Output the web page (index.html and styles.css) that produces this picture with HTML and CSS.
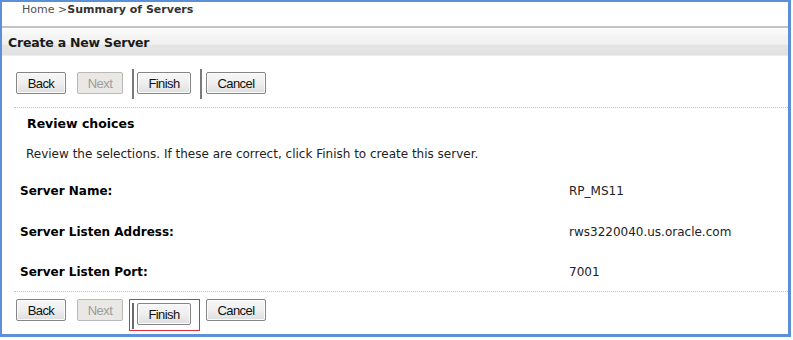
FILE: index.html
```html
<!DOCTYPE html>
<html>
<head>
<meta charset="utf-8">
<link rel="stylesheet" href="styles.css">
</head>
<body>
<div class="frame">
  <div class="crumbs"><span class="home">Home &gt;</span><span class="cur">Summary of Servers</span></div>
  <div class="title">Create a New Server</div>
  <div class="toolbar top">
    <button class="btn back">Back</button>
    <button class="btn next dis">Next</button>
    <span class="sep"></span>
    <button class="btn finish">Finish</button>
    <span class="sep"></span>
    <button class="btn cancel">Cancel</button>
  </div>
  <div class="content">
    <div class="sub">Review choices</div>
    <div class="desc">Review the selections. If these are correct, click Finish to create this server.</div>
    <div class="rows">
      <div class="row"><span class="lbl">Server Name:</span><span class="val">RP_MS11</span></div>
      <div class="row"><span class="lbl">Server Listen Address:</span><span class="val">rws3220040.us.oracle.com</span></div>
      <div class="row"><span class="lbl">Server Listen Port:</span><span class="val">7001</span></div>
    </div>
  </div>
  <div class="toolbar bottom">
    <button class="btn back">Back</button>
    <button class="btn next dis">Next</button>
    <span class="hl"><span class="sep small"></span><button class="btn finish">Finish</button></span>
    <button class="btn cancel">Cancel</button>
  </div>
</div>
</body>
</html>
```
FILE: styles.css
```css
html, body { margin: 0; padding: 0; background: #fff; }
body { width: 793px; height: 340px; overflow: hidden; font-family: "DejaVu Sans", Tahoma, sans-serif; color: #000; }
.frame {
  box-sizing: border-box;
  width: 791px;
  height: 337px;
  border: 2px solid #5b8fd8;
  border-bottom-width: 3px;
  border-right-width: 3px;
}
.crumbs {
  height: 24px; padding-left: 20px;
  font-size: 11px; line-height: 15px; color: #1a1a1a;
  border-bottom: 2px solid #c4c4c4;
}
.crumbs .home { color: #505050; }
.crumbs .cur { font-weight: bold; color: #333; }
.title {
  height: 26px; margin-top: 1px;
  background: linear-gradient(#fbfdfd 0%, #f4f4f4 25%, #f1f1f1 58%, #e5e5e5 62%, #e2e2e2 100%);
  border-bottom: 1px solid #ececec;
  font-size: 12.5px; font-weight: bold; line-height: 27px; padding-left: 6px; color: #1a1a1a;
  letter-spacing: -0.2px;
}
.toolbar { display: flex; align-items: flex-start; margin-left: 12px; padding-left: 2px; box-sizing: border-box; }
.toolbar.top { height: 52px; padding-top: 16px; border-bottom: 1px dotted #c4c4c4; }
.btn {
  font-family: "Liberation Sans", Arial, sans-serif; font-size: 13px; letter-spacing: -0.6px;
  box-sizing: border-box; height: 22px; padding: 0; margin: 0;
  border: 1px solid #858585; border-radius: 2px;
  background: linear-gradient(#f7f7f7, #efefef 50%, #dedede);
  box-shadow: inset 0 0 0 1px #fbfbfb;
  color: #111;
}
.btn.dis { color: #9c9c9c; border-color: #b9b9b9; background: #e9e8e4; box-shadow: none; }
.back { width: 50px; margin-right: 11px; }
.next { width: 46px; }
.finish { width: 54px; }
.cancel { width: 60px; }
.toolbar.top .sep { width: 2px; height: 30px; margin-top: -3px; background: #7a7a7a; }
.toolbar.top .next + .sep { margin-left: 9px; margin-right: 3px; }
.toolbar.top .finish + .sep { margin-left: 9px; margin-right: 4px; }
.content { padding: 8px 0 0 18px; height: 183px; box-sizing: border-box; }
.sub { font-size: 12.5px; font-weight: bold; padding-left: 7px; line-height: 15px; }
.desc { font-size: 12px; padding-left: 6px; margin-top: 16px; line-height: 15px; color: #222; }
.rows { margin-top: 22px; }
.row { display: flex; height: 40.5px; font-size: 12px; line-height: 15px; }
.row:last-child { height: 26px; }
.lbl { font-weight: bold; width: 549px; }
.val { color: #222; }
.toolbar.bottom { border-top: 1px dotted #c4c4c4; padding-top: 7px; }
.hl {
  display: flex; align-items: flex-start;
  border: 1px solid #e3303c;
  height: 32px; box-sizing: border-box;
  padding: 3px 8px 0 2px;
  margin: 0 6px 0 6px;
}
.sep.small { width: 2px; height: 26px; background: #6a6a6a; margin-right: 3px; }
```
